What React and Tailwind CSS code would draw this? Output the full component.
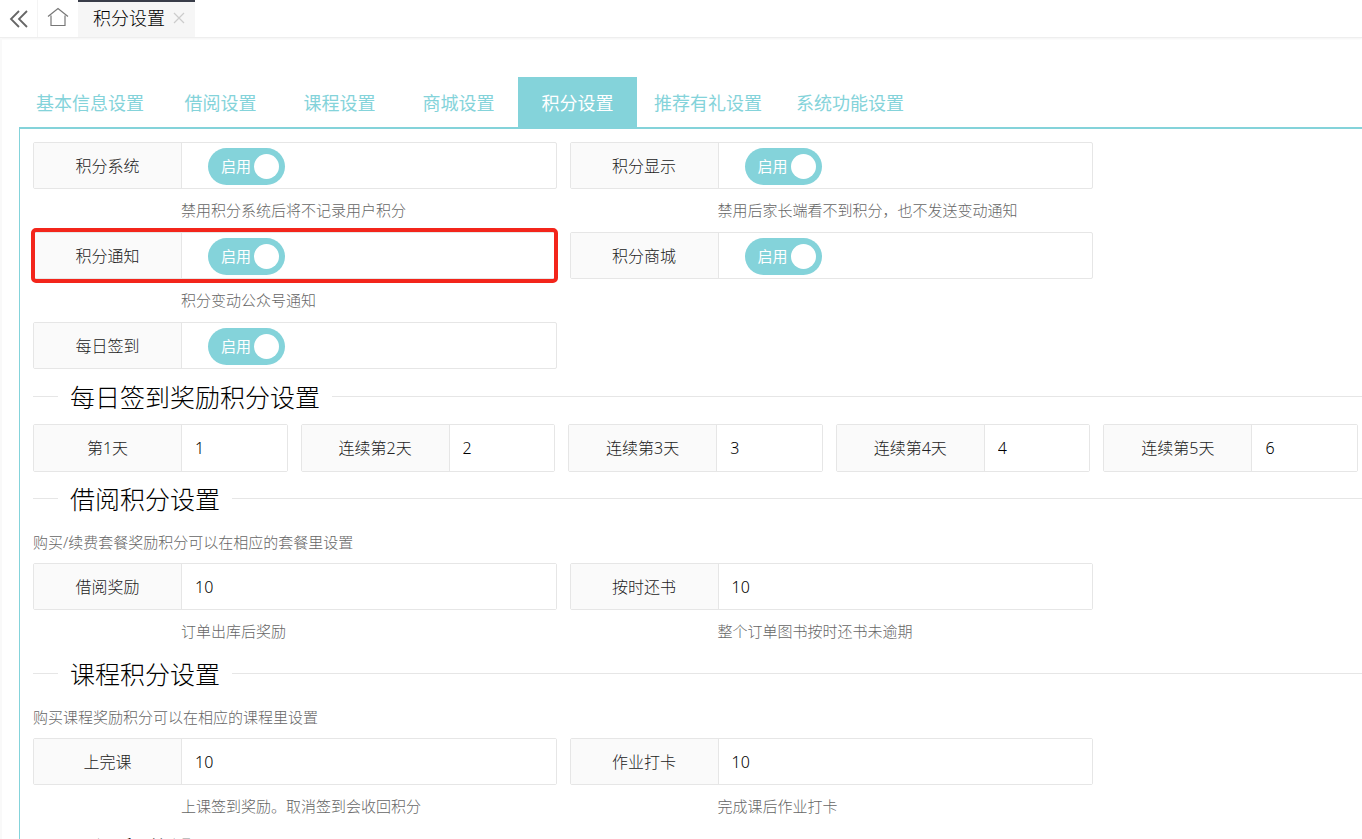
import { useState } from 'react';

const tabs = ['基本信息设置', '借阅设置', '课程设置', '商城设置', '积分设置', '推荐有礼设置', '系统功能设置'];

const days = [
  { id: 'day1', label: '第1天', value: '1' },
  { id: 'day2', label: '连续第2天', value: '2' },
  { id: 'day3', label: '连续第3天', value: '3' },
  { id: 'day4', label: '连续第4天', value: '4' },
  { id: 'day5', label: '连续第5天', value: '6' },
];

function Field({ id, label, hint, marked, tall, children }) {
  return (
    <div>
      <div className={`relative flex rounded-xs border border-[#e6e6e6] ${tall ? 'h-12' : 'h-[47px]'}`}>
        <label
          htmlFor={id}
          className="flex w-[148px] shrink-0 items-center justify-center border-r border-[#e6e6e6] bg-[#fafafa] text-base text-[#222]"
        >
          {label}
        </label>
        {children}
        {marked && (
          <div className="pointer-events-none absolute -top-[5px] -right-[2px] -bottom-[5px] -left-[3px] rounded-[5px] border-4 border-[#f3251b]" />
        )}
      </div>
      {hint && <p className="mt-[11px] pl-[148px] text-[15px] leading-5 text-[#666]">{hint}</p>}
    </div>
  );
}

function SwitchField({ id, label, hint, marked }) {
  const [on, setOn] = useState(true);
  return (
    <Field id={id} label={label} hint={hint} marked={marked}>
      <div className="flex items-center pt-px pl-[26px]">
        <button
          id={id}
          type="button"
          role="switch"
          aria-checked={on}
          onClick={() => setOn(!on)}
          className="flex h-[37px] w-[77px] items-center justify-between rounded-full bg-[#84d3da] pr-1.5 pl-[13px] text-[15px] font-normal text-white"
        >
          <span>{on ? '启用' : '禁用'}</span>
          <span className="size-[25px] rounded-full bg-white" />
        </button>
      </div>
    </Field>
  );
}

function InputField({ id, label, value, hint, tall }) {
  return (
    <Field id={id} label={label} hint={hint} tall={tall}>
      <input
        id={id}
        type="text"
        defaultValue={value}
        className="min-w-0 flex-1 bg-white px-[13px] text-base text-black outline-none"
      />
    </Field>
  );
}

function SectionTitle({ children }) {
  return (
    <h2 className="flex h-[38px] items-center text-[25px] font-light text-black">
      <span className="h-px w-[25px] bg-[#e6e6e6]" />
      <span className="px-3 pt-[3px]">{children}</span>
      <span className="h-px flex-1 bg-[#e6e6e6]" />
    </h2>
  );
}

function Row({ children }) {
  return (
    <div className="pr-1">
      <div className="grid w-4/5 grid-cols-2 gap-x-[13px]">{children}</div>
    </div>
  );
}

export default function App() {
  return (
    <div className="flex h-screen flex-col overflow-hidden bg-white font-['Noto_Sans','Noto_Sans_CJK_SC',sans-serif] font-light">
      {/* Top bar */}
      <header className="flex h-[38px] shrink-0 border-b border-[#eee] shadow-xs">
        <button type="button" aria-label="收起" className="flex w-[38px] items-center justify-center border-r border-[#f4f4f4]">
          <svg width="20" height="20" viewBox="0 0 20 20" fill="none" stroke="#666" strokeWidth="1.8">
            <path d="M10 2 L2 10 L10 18 M18 2 L10 10 L18 18" />
          </svg>
        </button>
        <a href="#" aria-label="首页" className="flex w-10 items-center justify-center pb-1">
          <svg width="22" height="20" viewBox="0 0 22 20" fill="none" stroke="#777" strokeWidth="1.2">
            <path d="M1 9.5 L11 1.5 L21 9.5 M4 8.5 V18.5 H18 V8.5" />
          </svg>
        </a>
        <div className="flex items-center border-t-2 border-[#393d49] bg-[#f6f6f6] pr-2.5 pb-1 pl-[15px] text-lg text-black">
          <span>积分设置</span>
          <button type="button" aria-label="关闭" className="ml-2">
            <svg width="12" height="12" viewBox="0 0 12 12" fill="none" stroke="#ccc" strokeWidth="1.2">
              <path d="M1 1 L11 11 M11 1 L1 11" />
            </svg>
          </button>
        </div>
      </header>

      <main className="flex flex-1 flex-col border-l-2 border-[#f9f9f9] pt-[39px] pl-[17px]">
        {/* Setting tabs */}
        <nav className="flex h-[52px] shrink-0 border-b-2 border-[#84d3da] font-normal">
          {tabs.map((tab) => (
            <button
              key={tab}
              type="button"
              className={`min-w-[119px] px-[17px] pt-0.5 text-lg whitespace-nowrap ${
                tab === '积分设置' ? 'bg-[#84d3da] text-white' : 'text-[#84d3da]'
              }`}
            >
              {tab}
            </button>
          ))}
        </nav>

        <form className="flex-1 border-l border-[#84d3da] pt-[13px] pl-[13px]">
          <div className="flex flex-col gap-3">
            <Row>
              <SwitchField id="points" label="积分系统" hint="禁用积分系统后将不记录用户积分" />
              <SwitchField id="show" label="积分显示" hint="禁用后家长端看不到积分，也不发送变动通知" />
            </Row>
            <Row>
              <SwitchField id="notice" label="积分通知" hint="积分变动公众号通知" marked />
              <SwitchField id="mall" label="积分商城" />
            </Row>
            <Row>
              <SwitchField id="sign" label="每日签到" />
            </Row>
          </div>

          {/* Daily sign-in */}
          <div className="mt-2">
            <SectionTitle>每日签到奖励积分设置</SectionTitle>
          </div>
          <div className="mt-[9px] grid grid-cols-5 gap-x-[13px] pr-1">
            {days.map((day) => (
              <InputField key={day.id} {...day} tall />
            ))}
          </div>

          {/* Borrowing */}
          <div className="mt-[7px]">
            <SectionTitle>借阅积分设置</SectionTitle>
          </div>
          <p className="mt-[15px] mb-[11px] text-[15px] leading-5 text-[#666]">购买/续费套餐奖励积分可以在相应的套餐里设置</p>
          <Row>
            <InputField id="borrow" label="借阅奖励" value="10" hint="订单出库后奖励" />
            <InputField id="return" label="按时还书" value="10" hint="整个订单图书按时还书未逾期" />
          </Row>

          {/* Courses */}
          <div className="mt-[13px]">
            <SectionTitle>课程积分设置</SectionTitle>
          </div>
          <p className="mt-[15px] mb-[11px] text-[15px] leading-5 text-[#666]">购买课程奖励积分可以在相应的课程里设置</p>
          <Row>
            <InputField id="finish" label="上完课" value="10" hint="上课签到奖励。取消签到会收回积分" />
            <InputField id="homework" label="作业打卡" value="10" hint="完成课后作业打卡" />
          </Row>

          {/* Online courses */}
          <div className="mt-[13px]">
            <SectionTitle>网课积分设置</SectionTitle>
          </div>
        </form>
      </main>
    </div>
  );
}
